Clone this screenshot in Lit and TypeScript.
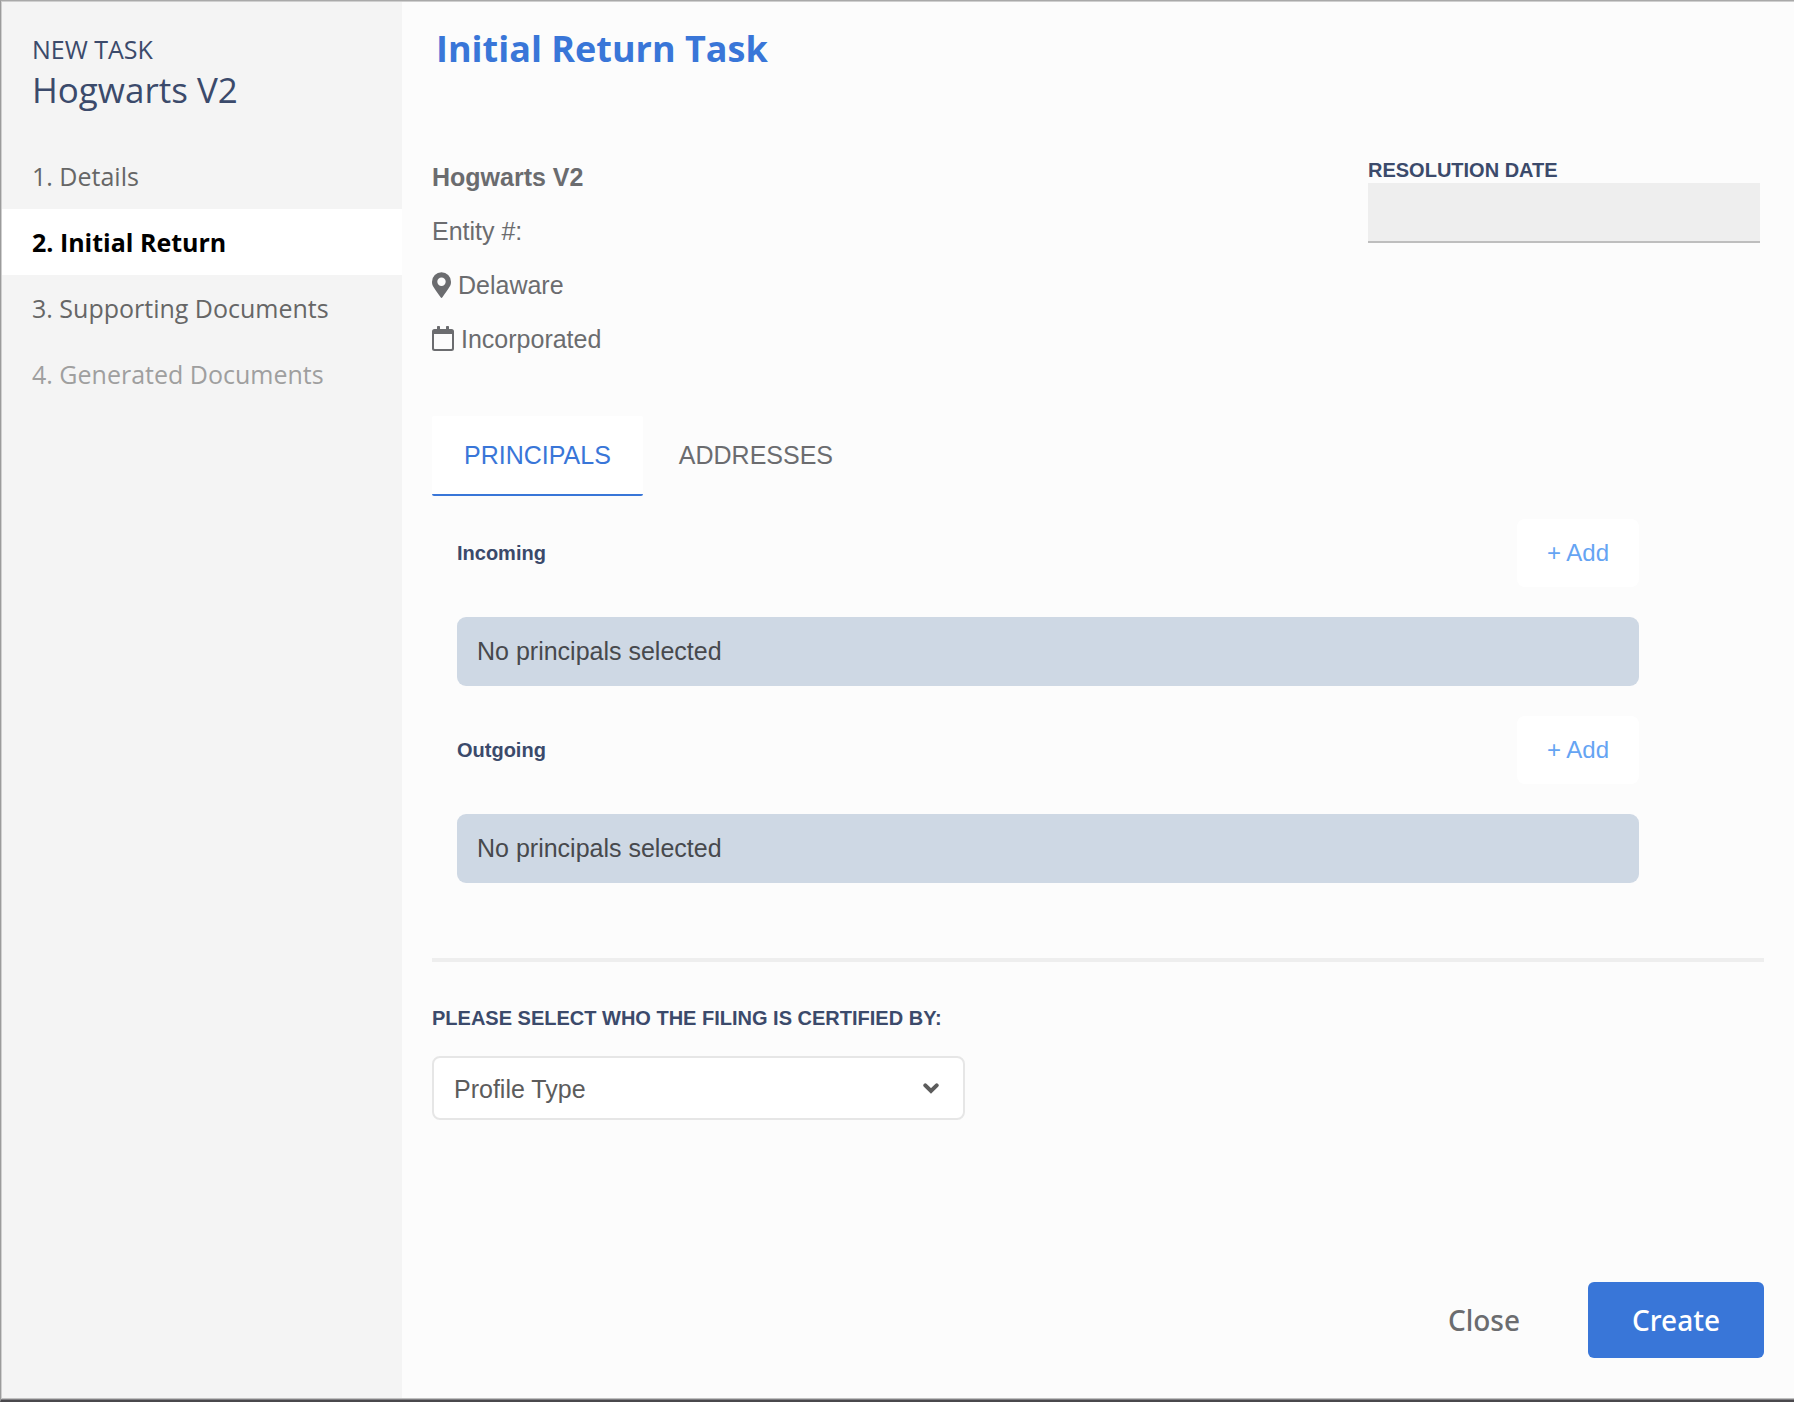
import { LitElement, html, css, svg } from "lit";
import { customElement, state } from "lit/decorators.js";
import { classMap } from "lit/directives/class-map.js";

interface Step {
  label: string;
  disabled?: boolean;
}

const STEPS: Step[] = [
  { label: "1. Details" },
  { label: "2. Initial Return" },
  { label: "3. Supporting Documents" },
  { label: "4. Generated Documents", disabled: true },
];

const TABS = ["Principals", "Addresses"];

const pinIcon = svg`<path d="M8.6 25.3C1.3 14.8 0 13.7 0 9.7a9.5 9.5 0 0 1 19 0c0 4-1.3 5.100-8.600 15.600a1.100 1.100 0 0 1-1.800 0z M9.500 5.600a4.200 4.200 0 1 0 0 8.400 4.200 4.200 0 0 0 0-8.400z" fill-rule="evenodd"/>`;

@customElement("app-root")
export class AppRoot extends LitElement {
  @state() private step = 1;
  @state() private tab = 0;

  static styles = css`
    :host {
      display: block;
      font-family: "Liberation Sans", Arial, sans-serif;
      font-size: 25px;
      line-height: 30px;
      color: #6b6c6f;
    }
    * {
      box-sizing: border-box;
    }
    h1, h2, h3, p, ol {
      margin: 0;
      padding: 0;
      font-weight: 400;
    }
    button, input, select {
      font: inherit;
      color: inherit;
      margin: 0;
      border: 0;
      background: none;
    }
    button {
      cursor: pointer;
    }
    .window {
      display: flex;
      flex-direction: column;
      min-height: 100vh;
      background: #fcfcfc;
      border-top: 1px solid #a9a9a9;
      border-left: 1px solid #9b9b9b;
      border-bottom: 2px solid #4a484c;
    }
    .dialog {
      flex: 1;
      display: flex;
      margin-bottom: 1px;
      border-top: 1px solid #cfcfcf;
      border-left: 1px solid #cfcfcf;
      border-bottom: 1px solid #c0c0c0;
      box-shadow: 0 1px #807f82;
    }
    .sidebar {
      flex: 0 0 400px;
      background: #f4f4f4;
      font-family: "Open Sans", sans-serif;
    }
    .heading {
      padding: 32px 30px 27px;
      color: #3b4a6b;
    }
    .company {
      font-size: 35px;
      line-height: 52px;
    }
    .steps {
      list-style: none;
    }
    .step {
      display: block;
      width: 100%;
      height: 66px;
      padding: 0 30px;
      text-align: left;
      color: #666;
    }
    .step.active {
      background: #fff;
      color: #000;
      font-weight: 700;
    }
    .step:disabled {
      color: #9f9f9f;
      cursor: default;
    }
    .main {
      flex: 1;
      min-width: 0;
      display: flex;
      flex-direction: column;
      padding: 23px 30px 40px;
    }
    .title {
      padding-left: 4px;
      font-family: "Open Sans", sans-serif;
      font-size: 36px;
      line-height: 48px;
      font-weight: 700;
      color: #3976d8;
    }
    .summary {
      display: flex;
      justify-content: space-between;
      padding: 77px 4px 0 0;
    }
    .facts {
      display: flex;
      flex-direction: column;
      line-height: 54px;
    }
    .name {
      font-weight: 700;
    }
    .fact {
      display: flex;
      align-items: center;
      gap: 7px;
    }
    .fact svg {
      fill: currentColor;
    }
    .label {
      font-size: 20px;
      line-height: 24px;
      font-weight: 700;
      color: #3b4a6b;
    }
    .date {
      display: flex;
      flex-direction: column;
      width: 392px;
      padding-top: 8px;
    }
    .date input {
      height: 60px;
      margin-top: 1px;
      padding: 0 16px;
      border-bottom: 2px solid #bebebe;
      border-radius: 0;
      background: #eee;
    }
    .tabs {
      display: flex;
      gap: 4px;
      padding-top: 50px;
    }
    .tab {
      height: 80px;
      padding: 0 32px;
      border-bottom: 2px solid transparent;
      border-radius: 2px;
      text-transform: uppercase;
    }
    .tab.active {
      background: #fff;
      border-color: #3976d8;
      color: #3976d8;
    }
    .panel {
      display: flex;
      flex-direction: column;
      gap: 30px;
      padding: 23px 125px 75px 25px;
    }
    .group {
      display: flex;
      flex-direction: column;
      gap: 30px;
    }
    .group-head {
      display: flex;
      align-items: center;
      justify-content: space-between;
    }
    .add {
      height: 68px;
      padding: 0 30px;
      border-radius: 8px;
      background: #fff;
      font-size: 24px;
      color: #65a4f3;
    }
    .notice {
      padding: 20px;
      border-radius: 9px;
      background: #ced8e4;
      line-height: 29px;
      color: #47494d;
    }
    .certify {
      display: flex;
      flex-direction: column;
      align-items: flex-start;
      gap: 26px;
      padding-top: 44px;
      border-top: 4px solid #eee;
    }
    .select {
      display: grid;
      width: 40%;
      align-items: center;
    }
    .select select {
      grid-area: 1 / 1;
      width: 100%;
      height: 64px;
      padding: 2px 20px 0;
      appearance: none;
      border: 2px solid #e6e6e6;
      border-radius: 8px;
      background: #fff;
      color: #5c5c5c;
    }
    .select svg {
      grid-area: 1 / 1;
      justify-self: end;
      margin-right: 26px;
      pointer-events: none;
    }
    .actions {
      display: flex;
      justify-content: flex-end;
      gap: 24px;
      margin-top: auto;
      font-family: "Noto Sans", "Open Sans", sans-serif;
      font-size: 28px;
      font-weight: 500;
    }
    .action {
      height: 76px;
      padding: 0 44px;
      border-radius: 6px;
    }
    .action.primary {
      background: #3976d8;
      color: #fff;
    }
  `;

  private renderGroup(name: string) {
    return html`
      <section class="group">
        <div class="group-head">
          <h3 class="label">${name}</h3>
          <button class="add" type="button">+ Add</button>
        </div>
        <p class="notice">No principals selected</p>
      </section>
    `;
  }

  render() {
    return html`
      <div class="window">
        <div class="dialog">
          <nav class="sidebar">
            <div class="heading">
              <p>NEW TASK</p>
              <h2 class="company">Hogwarts V2</h2>
            </div>
            <ol class="steps">
              ${STEPS.map(
                (s, i) => html`<li>
                  <button
                    type="button"
                    class=${classMap({ step: true, active: i === this.step })}
                    ?disabled=${s.disabled}
                    @click=${() => (this.step = i)}
                  >${s.label}</button>
                </li>`
              )}
            </ol>
          </nav>
          <main class="main">
            <h1 class="title">Initial Return Task</h1>
            <div class="summary">
              <div class="facts">
                <p class="name">Hogwarts V2</p>
                <p>Entity #:</p>
                <p class="fact">
                  <svg width="19" height="26" viewBox="0 0 19 26" aria-hidden="true">${pinIcon}</svg>
                  Delaware
                </p>
                <p class="fact">
                  <svg width="22" height="26" viewBox="0 0 22 26" aria-hidden="true">
                    <path fill-rule="evenodd" d="M5 .8Q5 0 5.800 0H7.200Q8 0 8 .8V3H14V.8Q14 0 14.800 0H16.200Q17 0 17 .8V3H19.500A2.500 2.500 0 0 1 22 5.500V22.500A2.500 2.500 0 0 1 19.500 25H2.500A2.500 2.500 0 0 1 0 22.500V5.500A2.500 2.500 0 0 1 2.500 3H5Z M2 8V22.300Q2 23 2.700 23H19.300Q20 23 20 22.300V8Z"/>
                  </svg>
                  Incorporated
                </p>
              </div>
              <div class="date">
                <label class="label" for="resolution-date">RESOLUTION DATE</label>
                <input id="resolution-date" type="text" />
              </div>
            </div>
            <div class="tabs" role="tablist">
              ${TABS.map(
                (t, i) => html`<button
                  type="button"
                  role="tab"
                  aria-selected=${i === this.tab}
                  class=${classMap({ tab: true, active: i === this.tab })}
                  @click=${() => (this.tab = i)}
                >${t}</button>`
              )}
            </div>
            <div class="panel">
              ${this.renderGroup("Incoming")} ${this.renderGroup("Outgoing")}
            </div>
            <div class="certify">
              <label class="label" for="certifier">PLEASE SELECT WHO THE FILING IS CERTIFIED BY:</label>
              <div class="select">
                <select id="certifier">
                  <option>Profile Type</option>
                </select>
                <svg width="16" height="12" viewBox="0 0 16 12" aria-hidden="true">
                  <path d="M2.300 3.300 8 9l5.700-5.700" fill="none" stroke="#5c5c5c" stroke-width="4" stroke-linecap="round"/>
                </svg>
              </div>
            </div>
            <div class="actions">
              <button class="action" type="button">Close</button>
              <button class="action primary" type="button">Create</button>
            </div>
          </main>
        </div>
      </div>
    `;
  }
}
